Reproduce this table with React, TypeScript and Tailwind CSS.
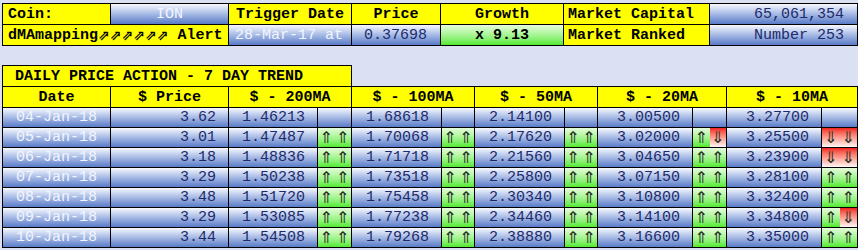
import React from "react";

const blue = "bg-linear-to-b from-[#f8f9fe] to-[#5a7bc7]";
const green = "bg-linear-to-b from-[#e6fcdb] to-[#50ea2a]";
const red = "bg-linear-to-b from-[#ee1a1a] to-[#fff6f6]";
const yellow = "bg-[#ffff00]";

type Trend = "uu" | "ud" | "dd" | null;

const ROWS: { date: string; price: string; ma: [string, Trend][] }[] = [
  { date: "04-Jan-18", price: "3.62", ma: [["1.46213", null], ["1.68618", null], ["2.14100", null], ["3.00500", null], ["3.27700", null]] },
  { date: "05-Jan-18", price: "3.01", ma: [["1.47487", "uu"], ["1.70068", "uu"], ["2.17620", "uu"], ["3.02000", "ud"], ["3.25500", "dd"]] },
  { date: "06-Jan-18", price: "3.18", ma: [["1.48836", "uu"], ["1.71718", "uu"], ["2.21560", "uu"], ["3.04650", "uu"], ["3.23900", "dd"]] },
  { date: "07-Jan-18", price: "3.29", ma: [["1.50238", "uu"], ["1.73518", "uu"], ["2.25800", "uu"], ["3.07150", "uu"], ["3.28100", "uu"]] },
  { date: "08-Jan-18", price: "3.48", ma: [["1.51720", "uu"], ["1.75458", "uu"], ["2.30340", "uu"], ["3.10800", "uu"], ["3.32400", "uu"]] },
  { date: "09-Jan-18", price: "3.29", ma: [["1.53085", "uu"], ["1.77238", "uu"], ["2.34460", "uu"], ["3.14100", "uu"], ["3.34800", "ud"]] },
  { date: "10-Jan-18", price: "3.44", ma: [["1.54508", "uu"], ["1.79268", "uu"], ["2.38880", "uu"], ["3.16600", "uu"], ["3.35000", "uu"]] },
];

const HEADERS = ["$ - 200MA", "$ - 100MA", "$ - 50MA", "$ - 20MA", "$ - 10MA"];

function Arrow({ up }: { up: boolean }) {
  return (
    <span className="font-['DejaVu_Sans',sans-serif] text-[16px] text-[#26301f] leading-none">
      {up ? "⇑" : "⇓"}
    </span>
  );
}

function TrendCell({ trend }: { trend: Trend }) {
  if (!trend) return <div className={blue} />;
  if (trend === "ud") {
    return (
      <div className="flex">
        <div className={`flex-1 flex items-center justify-center ${green}`}>
          <Arrow up />
        </div>
        <div className={`flex-1 flex items-center justify-center ${red}`}>
          <Arrow up={false} />
        </div>
      </div>
    );
  }
  const up = trend === "uu";
  return (
    <div className={`flex ${up ? green : red}`}>
      <div className="flex-1 flex items-center justify-center">
        <Arrow up={up} />
      </div>
      <div className="flex-1 flex items-center justify-center">
        <Arrow up={up} />
      </div>
    </div>
  );
}

export default function App() {
  return (
    <div className="w-[858px] h-[250px] bg-[#dbe0f2] font-['Liberation_Mono',monospace] text-[15px] leading-none overflow-hidden">
      <div className="pt-[3px] pl-[2px]">
        {/* coin summary */}
        <div className="grid grid-cols-[107px_117px_122px_88px_122px_145px_147px] auto-rows-[20px] gap-px p-px bg-black w-[856px]">
          <div className={`${yellow} flex items-center pl-[5px] font-bold text-black`}>Coin:</div>
          <div className={`${blue} flex items-center justify-center text-[#f2f5ff]`}>ION</div>
          <div className={`${yellow} flex items-center justify-center font-bold text-black`}>Trigger Date</div>
          <div className={`${yellow} flex items-center justify-center font-bold text-black`}>Price</div>
          <div className={`${yellow} flex items-center justify-center font-bold text-black`}>Growth</div>
          <div className={`${yellow} flex items-center pl-[4px] font-bold text-black`}>Market Capital</div>
          <div className={`${blue} flex items-center justify-end pr-[13px] text-[#1d2a6c]`}>65,061,354</div>

          <div className={`${yellow} col-span-2 flex items-center pl-[5px] font-bold text-black whitespace-nowrap`}>
            dMAmapping
            <span className="font-['DejaVu_Sans',sans-serif] text-[14px] font-bold">⇗⇗⇗⇗⇗⇗</span>
            &nbsp;Alert
          </div>
          <div className={`${blue} flex items-center justify-end pr-[8px] text-[#f2f5ff] whitespace-pre`}>28-Mar-17 at</div>
          <div className={`${blue} flex items-center justify-end pr-[13px] text-[#1d2a6c]`}>0.37698</div>
          <div className={`${green} flex items-center justify-center font-bold text-black`}>x 9.13</div>
          <div className={`${yellow} flex items-center pl-[4px] font-bold text-black`}>Market Ranked</div>
          <div className={`${blue} flex items-center justify-end pr-[13px] text-[#1d2a6c]`}>Number 253</div>
        </div>

        {/* daily trend */}
        <div className="mt-[19px] w-[350px] h-[21px] border border-b-0 border-black bg-[#ffff00] flex items-center pl-[12px] font-bold text-black whitespace-pre">
          DAILY PRICE ACTION - 7 DAY TREND
        </div>
        <div className="grid grid-cols-[107px_117px_88px_33px_89px_32px_89px_32px_94px_33px_94px_35px] grid-rows-[20px] auto-rows-[19px] gap-px p-px bg-black w-[856px]">
          <div className={`${yellow} flex items-center justify-center font-bold text-black`}>Date</div>
          <div className={`${yellow} flex items-center justify-center font-bold text-black whitespace-pre`}>$ Price</div>
          {HEADERS.map((h) => (
            <div key={h} className={`${yellow} col-span-2 flex items-center justify-center font-bold text-black whitespace-pre`}>
              {h}
            </div>
          ))}

          {ROWS.map((r) => (
            <React.Fragment key={r.date}>
              <div className={`${blue} flex items-center justify-center text-[#f2f5ff]`}>{r.date}</div>
              <div className={`${blue} flex items-center justify-end pr-[12px] text-[#1d2a6c]`}>{r.price}</div>
              {r.ma.map(([v, t], i) => (
                <React.Fragment key={i}>
                  <div className={`${blue} flex items-center justify-end pr-[12px] text-[#1d2a6c]`}>{v}</div>
                  <TrendCell trend={t} />
                </React.Fragment>
              ))}
            </React.Fragment>
          ))}
        </div>
      </div>
    </div>
  );
}
